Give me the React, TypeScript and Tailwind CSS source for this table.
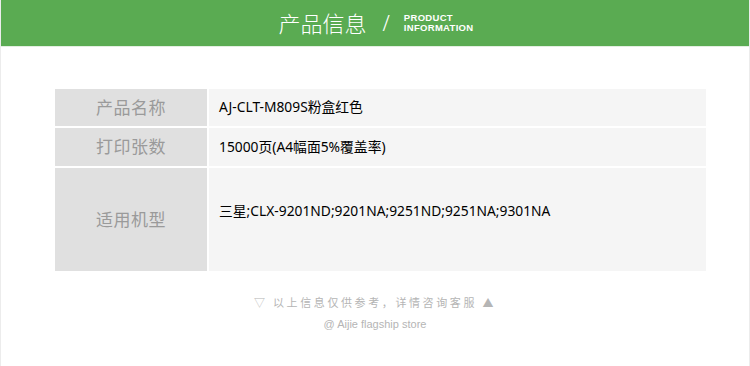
import React from 'react';

const rows = [
  { label: '产品名称', value: 'AJ-CLT-M809S粉盒红色', h: 'h-[37px]', pad: '' },
  { label: '打印张数', value: '15000页(A4幅面5%覆盖率)', h: 'h-[38px]', pad: '' },
  { label: '适用机型', value: '三星;CLX-9201ND;9201NA;9251ND;9251NA;9301NA', h: 'h-[103px]', pad: 'pb-[16px]' },
];

const cjk = { fontFamily: '"Noto Sans", "Noto Sans CJK SC", sans-serif' };

export default function App() {
  return (
    <div className="w-[750px] h-[366px] bg-white border-x border-[#ececec] overflow-hidden" style={cjk}>
      {/* header */}
      <div className="h-[47px] bg-[#5aab52] border-b border-[#e3efe1] flex items-center justify-center">
        <div className="flex items-center pl-[2px]">
          <span className="text-[22px] font-light text-white leading-none">产品信息</span>
          <span className="text-[21px] font-light text-white ml-[16px] mr-[14px] leading-none">/</span>
          <div className="flex flex-col text-white text-[9.5px] font-bold leading-[10px] tracking-[0.3px]" style={{ fontFamily: '"Liberation Sans", Arial, sans-serif' }}>
            <span>PRODUCT</span>
            <span>INFORMATION</span>
          </div>
        </div>
      </div>

      {/* table */}
      <div className="mt-[42px] ml-[54px] w-[651px] flex flex-col gap-[2px]">
        {rows.map((r) => (
          <div key={r.label} className={`flex gap-[2px] ${r.h}`}>
            <div className="w-[152px] bg-[#e0e0e0] flex items-center justify-center text-[17px] text-[#9a9a9a] tracking-[0.5px]">
              {r.label}
            </div>
            <div className={`flex-1 bg-[#f5f5f5] flex items-center pl-[10px] text-[13.8px] text-black ${r.pad}`}>
              {r.value}
            </div>
          </div>
        ))}
      </div>

      {/* footer */}
      <div className="mt-[24px] flex flex-col items-center text-[#b5b5b5]">
        <div className="text-[11px] leading-[16px] tracking-[2.6px]">▽ 以上信息仅供参考，详情咨询客服 ▲</div>
        <div className="text-[11px] leading-[14px] mt-[6px]" style={{ fontFamily: '"Liberation Sans", Arial, sans-serif' }}>@ Aijie flagship store</div>
      </div>
    </div>
  );
}
